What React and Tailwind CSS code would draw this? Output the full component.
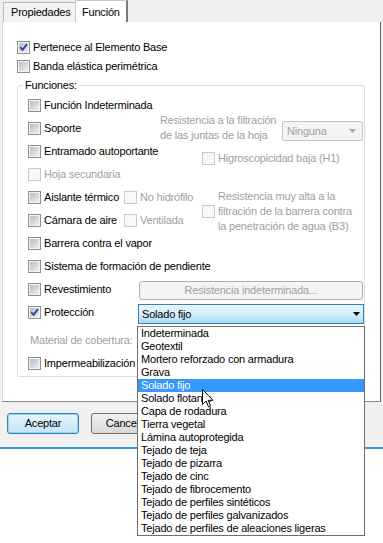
import React from 'react';

function Cb({ checked = false, disabled = false }) {
  if (disabled)
    return <span className="inline-block h-[13px] w-[13px] shrink-0 border border-[#c9c9c9] bg-[#f8f8f8]" />;
  return (
    <span className="relative inline-flex h-[13px] w-[13px] shrink-0 border border-[#8e8f8f] bg-[#f4f4f4] p-[1px]">
      <span className="block h-full w-full bg-linear-to-br from-[#b9bdc2] to-[#f0f0f0]" />
      {checked && (
        <svg className="absolute left-[1px] top-[1px]" width="9" height="9" viewBox="0 0 9 9">
          <path d="M1.2 4.2 L3.6 6.8 L8 1.2" fill="none" stroke="#2546a6" strokeWidth="1.9" />
        </svg>
      )}
    </span>
  );
}

function Row({ label, checked, disabled, className = '' }) {
  return (
    <div className={`flex h-[23px] items-center gap-[3px] ${className}`}>
      <Cb checked={checked} disabled={disabled} />
      <span className={disabled ? 'whitespace-nowrap text-[#a0a0a0]' : 'whitespace-nowrap text-black'}>{label}</span>
    </div>
  );
}

const items = [
  'Indeterminada',
  'Geotextil',
  'Mortero reforzado con armadura',
  'Grava',
  'Solado fijo',
  'Solado flotante',
  'Capa de rodadura',
  'Tierra vegetal',
  'Lámina autoprotegida',
  'Tejado de teja',
  'Tejado de pizarra',
  'Tejado de cinc',
  'Tejado de fibrocemento',
  'Tejado de perfiles sintéticos',
  'Tejado de perfiles galvanizados',
  'Tejado de perfiles de aleaciones ligeras',
];

export default function App() {
  return (
    <div className="relative h-[543px] w-[383px] overflow-hidden bg-white font-['Liberation_Sans',Arial,sans-serif] text-[11px] leading-[13px] tracking-[-0.2px] text-black">
      <div className="flex h-[449px] flex-col border-b-2 border-[#3a97dc] bg-[#f0f0f0]">
        {/* Tabs */}
        <div className="flex h-[22px] shrink-0 items-end pl-[3px]">
          <div className="flex h-[20px] w-[72px] items-center border-l border-t border-[#b9b9b9] bg-[#f4f4f4] pb-[1px] pl-[7px]">
            Propiedades
          </div>
          <div className="flex h-[22px] w-[53px] items-center border-l border-t border-r-2 border-l-[#c8c8c8] border-t-[#c8c8c8] border-r-[#7a7a7a] bg-white pl-[6px] pt-[1px]">
            Función
          </div>
        </div>

        {/* Panel */}
        <div className="ml-[2px] flex h-[380px] w-[379px] shrink-0 border-b border-l border-r border-b-[#8a8a8a] border-l-[#d4d4d4] border-r-[#6b6b6b]">
          <div className="flex flex-1 flex-col bg-white pl-[14px] pt-[16px]">
            <div className="flex h-[19px] items-center gap-[3px]">
              <Cb checked />
              <span>Pertenece al Elemento Base</span>
            </div>
            <div className="flex h-[19px] items-center gap-[3px]">
              <Cb />
              <span>Banda elástica perimétrica</span>
            </div>

            <fieldset className="mt-[3px] w-[348px] rounded-[3px] border border-[#d5dfe5] pb-[1px]">
              <legend className="ml-[5px] px-[2px] leading-[13px]">Funciones:</legend>
              <div className="flex flex-col pl-[10px] pt-[2px]">
                {/* Block A */}
                <div className="flex h-[92px]">
                  <div className="flex w-[132px] shrink-0 flex-col">
                    <Row label="Función Indeterminada" />
                    <Row label="Soporte" />
                    <Row label="Entramado autoportante" />
                    <Row label="Hoja secundaria" disabled />
                  </div>
                  <div className="flex flex-col pt-[19px]">
                    <div className="flex items-start">
                      <div className="w-[122px] leading-[15px] text-[#a0a0a0]">
                        <div className="whitespace-nowrap">Resistencia a la filtración</div>
                        <div className="whitespace-nowrap">de las juntas de la hoja</div>
                      </div>
                      <div className="mt-[8px] flex h-[20px] w-[81px] items-center justify-between rounded-[2px] border border-[#c5c5c5] bg-[#f4f4f4] pl-[4px] pr-[6px] text-[#a0a0a0]">
                        <span>Ninguna</span>
                        <svg width="7" height="4" viewBox="0 0 7 4">
                          <path d="M0 0 H7 L3.5 4 Z" fill="#a8a8a8" />
                        </svg>
                      </div>
                    </div>
                    <div className="ml-[42px] mt-[8px] flex h-[15px] items-center gap-[3px] text-[#a0a0a0]">
                      <Cb disabled />
                      <span className="whitespace-nowrap">Higroscopicidad baja (H1)</span>
                    </div>
                  </div>
                </div>

                {/* Block B */}
                <div className="flex h-[46px]">
                  <div className="flex w-[96px] shrink-0 flex-col">
                    <Row label="Aislante térmico" />
                    <Row label="Cámara de aire" />
                  </div>
                  <div className="flex w-[78px] shrink-0 flex-col">
                    <Row label="No hidrófilo" disabled />
                    <Row label="Ventilada" disabled />
                  </div>
                  <div className="flex h-[45px] items-center gap-[3px] self-start pt-[5px]">
                    <Cb disabled />
                    <div className="leading-[15px] text-[#a0a0a0]">
                      <div className="whitespace-nowrap">Resistencia muy alta a la</div>
                      <div className="whitespace-nowrap">filtración de la barrera contra</div>
                      <div className="whitespace-nowrap">la penetración de agua (B3)</div>
                    </div>
                  </div>
                </div>

                {/* Block C */}
                <div className="flex h-[46px] flex-col">
                  <Row label="Barrera contra el vapor" />
                  <Row label="Sistema de formación de pendiente" />
                </div>

                {/* Block D */}
                <div className="flex h-[46px]">
                  <div className="flex w-[110px] shrink-0 flex-col">
                    <Row label="Revestimiento" />
                    <Row label="Protección" checked />
                  </div>
                  <div className="flex flex-col pt-[3px]">
                    <div className="ml-[1px] flex h-[20px] w-[224px] items-center justify-center rounded-[3px] border border-[#adb2b5] bg-[#f4f4f4] text-[#a0a0a0]">
                      Resistencia indeterminada...
                    </div>
                    <div className="relative mt-[4px] flex h-[21px] w-[226px] items-center justify-between border border-[#3c7fb1] bg-linear-to-b from-[#eaf6fd] via-[#d4eefc] to-[#a9daf5] pl-[3px] pr-[3px]">
                      <span>Solado fijo</span>
                      <svg width="7" height="4" viewBox="0 0 7 4">
                        <path d="M0 0 H7 L3.5 4 Z" fill="#000" />
                      </svg>
                      {/* Dropdown list */}
                      <div className="absolute left-[-2px] top-[21px] z-10 w-[228px] border border-[#6e6e6e] bg-white">
                        {items.map((it) => (
                          <div
                            key={it}
                            className={
                              it === 'Solado fijo'
                                ? 'h-[13px] whitespace-nowrap bg-[#3399ff] pl-[3px] leading-[13px] text-white'
                                : 'h-[13px] whitespace-nowrap pl-[3px] leading-[13px] text-black'
                            }
                          >
                            {it}
                          </div>
                        ))}
                      </div>
                    </div>
                  </div>
                </div>

                {/* Block E */}
                <div className="mt-[5px] flex flex-col">
                  <div className="flex h-[23px] items-center pl-[2px] text-[#a0a0a0]">Material de cobertura:</div>
                  <Row label="Impermeabilización" />
                </div>
              </div>
            </fieldset>
          </div>
        </div>

        {/* Buttons */}
        <div className="flex gap-[12px] pl-[7px] pt-[11px]">
          <div className="flex h-[21px] w-[72px] items-center justify-center rounded-[3px] border border-[#3c7fb1] bg-linear-to-b from-[#e5f4fc] to-[#c4e5f6] shadow-[inset_0_0_0_1px_#8fd6fb]">
            Aceptar
          </div>
          <div className="flex h-[21px] w-[72px] items-center justify-center rounded-[3px] border border-[#707070] bg-linear-to-b from-[#f2f2f2] to-[#d8d8d8]">
            Cancelar
          </div>
        </div>
      </div>

      {/* Mouse cursor */}
      <svg className="absolute left-[202px] top-[389px] z-20" width="12" height="19" viewBox="0 0 12 19">
        <path d="M0.5 0.5 L0.5 15.5 L4 12 L6.5 17.8 L8.6 16.9 L6.2 11.3 L11 11.3 Z" fill="#fff" stroke="#000" strokeWidth="1" strokeLinejoin="miter" />
      </svg>
    </div>
  );
}
